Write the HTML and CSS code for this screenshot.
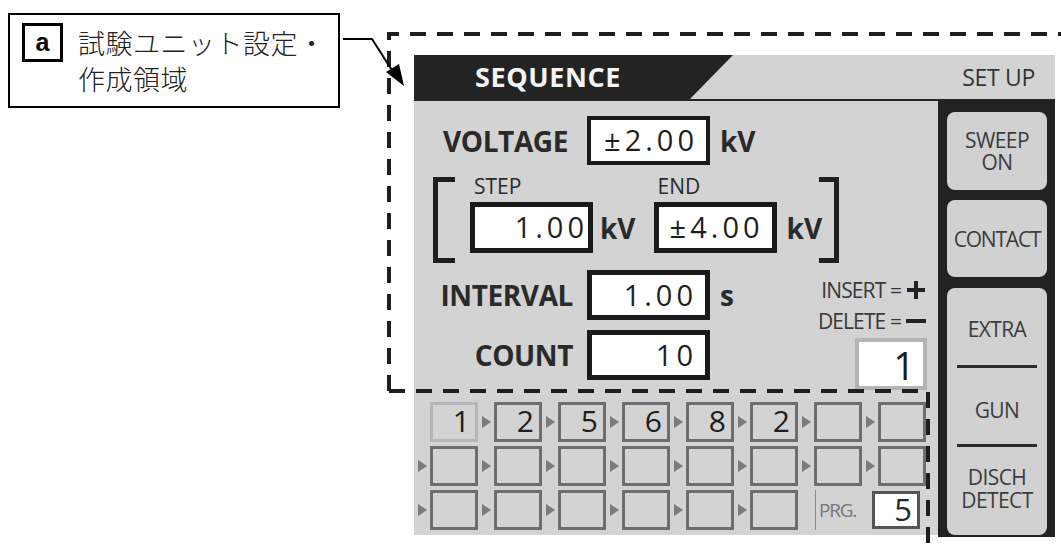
FILE: index.html
```html
<!DOCTYPE html>
<html>
<head lang="ja">
    <meta charset="UTF-8">
    <title>試験ユニット設定・作成領域</title>
    <link rel="stylesheet" href="styles.css">
</head>
<body>
<div id="figure">
    <div class="callout">
        <span class="mark">a</span>
        <p class="note">試験ユニット設定・<br>作成領域</p>
    </div>

    <div class="panel">
        <div class="head">
            <div class="tab">SEQUENCE</div>
            <div class="setup">SET UP</div>
        </div>
        <div class="body">
            <div class="main">
                <div class="upper">
                    <div class="settings">
                        <div class="row voltage">
                            <span class="label">VOLTAGE</span>
                            <span class="box">±2.00</span>
                            <span class="unit">kV</span>
                        </div>
                        <div class="sweep">
                            <span class="bracket left"></span>
                            <div class="field step">
                                <span class="cap">STEP</span>
                                <div class="line">
                                    <span class="box">1.00</span>
                                    <span class="unit">kV</span>
                                </div>
                            </div>
                            <div class="field end">
                                <span class="cap">END</span>
                                <div class="line">
                                    <span class="box">±4.00</span>
                                    <span class="unit">kV</span>
                                </div>
                            </div>
                            <span class="bracket right"></span>
                        </div>
                        <div class="row interval">
                            <span class="label">INTERVAL</span>
                            <span class="box">1.00</span>
                            <span class="unit">s</span>
                        </div>
                        <div class="row count">
                            <span class="label">COUNT</span>
                            <span class="box">10</span>
                        </div>
                    </div>
                    <div class="sideinfo">
                        <div class="key">INSERT =
                            <svg width="22" height="22" viewBox="0 0 22 22"><path d="M11 2V20M2 11H20" stroke="#222" stroke-width="4"/></svg>
                        </div>
                        <div class="key">DELETE =
                            <svg width="22" height="22" viewBox="0 0 22 22"><path d="M1 11H21" stroke="#222" stroke-width="4"/></svg>
                        </div>
                        <div class="unitno">1</div>
                    </div>
                </div>

                <div class="grid">
                    <div class="seq">
                        <i class="gap"></i><b class="cell first">1</b>
                        <i class="arr"></i><b class="cell">2</b>
                        <i class="arr"></i><b class="cell">5</b>
                        <i class="arr"></i><b class="cell">6</b>
                        <i class="arr"></i><b class="cell">8</b>
                        <i class="arr"></i><b class="cell">2</b>
                        <i class="arr"></i><b class="cell"></b>
                        <i class="arr"></i><b class="cell"></b>
                    </div>
                    <div class="seq">
                        <i class="arr"></i><b class="cell"></b>
                        <i class="arr"></i><b class="cell"></b>
                        <i class="arr"></i><b class="cell"></b>
                        <i class="arr"></i><b class="cell"></b>
                        <i class="arr"></i><b class="cell"></b>
                        <i class="arr"></i><b class="cell"></b>
                        <i class="arr"></i><b class="cell"></b>
                        <i class="arr"></i><b class="cell"></b>
                    </div>
                    <div class="seq">
                        <i class="arr"></i><b class="cell"></b>
                        <i class="arr"></i><b class="cell"></b>
                        <i class="arr"></i><b class="cell"></b>
                        <i class="arr"></i><b class="cell"></b>
                        <i class="arr"></i><b class="cell"></b>
                        <i class="arr"></i><b class="cell"></b>
                        <span class="prg">PRG.</span>
                        <b class="prgno">5</b>
                    </div>
                </div>
            </div>

            <div class="side">
                <div class="btn sweepon"><span>SWEEP</span><span>ON</span></div>
                <div class="btn contact">CONTACT</div>
                <div class="btn stack">
                    <span>EXTRA</span>
                    <hr class="rule1">
                    <span>GUN</span>
                    <hr class="rule2">
                    <span class="disch">DISCH</span>
                    <span class="disch">DETECT</span>
                </div>
            </div>
        </div>
    </div>
</div>

<svg class="overlay" width="1061" height="555" viewBox="0 0 1061 555">
    <path d="M389 391V34H1061" fill="none" stroke="#1e1e1e" stroke-width="4" stroke-dasharray="16 11"/>
    <path d="M389 391H928V545" fill="none" stroke="#1e1e1e" stroke-width="4" stroke-dasharray="16 11"/>
    <polyline points="343,39 372,39 395,75" fill="none" stroke="#000" stroke-width="2"/>
    <path d="M386 72L404 86L399 64Z" fill="#000"/>
</svg>
</body>
</html>
```

FILE: styles.css
```css
*{
    margin: 0;
    padding: 0;
}
body{
    width: 1061px;
    height: 555px;
    background: #ffffff;
    position: relative;
    overflow: hidden;
    font-family: "Open Sans", "Liberation Sans", sans-serif;
    color: #2a2a2a;
}
#figure{
    display: flex;
    align-items: flex-start;
    padding: 13px 0 0 8px;
}

/* callout */
.callout{
    width: 332px;
    height: 95px;
    box-sizing: border-box;
    border: 2px solid #000000;
    display: flex;
    align-items: flex-start;
    padding: 8px 0 0 12px;
}
.mark{
    width: 41px;
    height: 39px;
    box-sizing: border-box;
    border: 3px solid #000000;
    font: bold 25px/33px "Liberation Sans", sans-serif;
    text-align: center;
    color: #000000;
}
.note{
    margin: 2px 0 0 15px;
    font: 300 27px/36px "Noto Sans CJK JP", sans-serif;
    color: #222222;
    letter-spacing: 0.5px;
}

/* panel */
.panel{
    margin: 42px 0 0 74px;
    width: 641px;
    height: 482px;
    display: flex;
    flex-direction: column;
}
.head{
    height: 44px;
    background: #d3d3d3;
    border-bottom: 2px solid #262626;
    display: flex;
    align-items: center;
    justify-content: space-between;
}
.tab{
    width: 319px;
    height: 44px;
    box-sizing: border-box;
    background: #232323;
    clip-path: polygon(0 0, 100% 0, calc(100% - 43px) 100%, 0 100%);
    color: #f4f4f4;
    font-size: 27px;
    font-weight: 700;
    letter-spacing: 0.6px;
    line-height: 44px;
    padding-left: 61px;
}
.setup{
    font-size: 23px;
    color: #333333;
    padding-right: 20px;
    letter-spacing: -0.3px;
}
.body{
    flex: 1;
    display: flex;
}
.main{
    width: 524px;
    background: #d3d3d3;
    height: 434px;
}
.upper{
    height: 290px;
    display: flex;
}
.settings{
    flex: none;
    width: 390px;
    padding-top: 15px;
}
.row{
    display: flex;
    align-items: center;
    padding-left: 4px;
}
.label{
    width: 150px;
    text-align: right;
    font-size: 28px;
    font-weight: 700;
    letter-spacing: -0.4px;
    margin-right: 19px;
}
.interval .label, .count .label{
    width: 155px;
    margin-right: 14px;
}
.box{
    width: 123px;
    height: 49px;
    box-sizing: border-box;
    border: 4px solid #1a1a1a;
    background: #ffffff;
    text-align: right;
    font-size: 29px;
    line-height: 40px;
    letter-spacing: 4px;
    padding-right: 8px;
    color: #1e1e1e;
}
.unit{
    font-size: 28px;
    font-weight: 700;
    margin-left: 10px;
}
.sweep{
    display: flex;
    margin: 12px 0 0 19px;
    height: 76px;
}
.bracket{
    width: 17px;
    height: 76px;
    flex: none;
    border: 5px solid #1e1e1e;
}
.bracket.left{
    border-right: none;
    margin-right: 15px;
}
.bracket.right{
    border-left: none;
    width: 15px;
    margin-left: -3px;
}
.field{
    display: flex;
    flex-direction: column;
}
.field.end{
    margin-left: 18px;
}
.cap{
    height: 25px;
    font-size: 21px;
    line-height: 18px;
    padding-left: 4px;
}
.field .box{
    height: 51px;
    border-width: 5px;
}
.step .box{
    padding-right: 0;
}
.field .unit{
    margin-left: 7px;
}
.field.end .unit{
    margin-left: 10px;
}
.line{
    display: flex;
    align-items: center;
}
.interval{
    margin-top: 17px;
}
.interval .box, .count .box{
    height: 50px;
    border-width: 5px;
}
.count{
    margin-top: 10px;
}
.sideinfo{
    flex: none;
    margin-left: auto;
    padding-right: 11px;
    display: flex;
    flex-direction: column;
    align-items: flex-end;
    justify-content: flex-end;
    padding-bottom: 1px;
}
.key{
    display: flex;
    align-items: center;
    white-space: nowrap;
    font-size: 21px;
    letter-spacing: -0.9px;
    color: #383838;
    height: 31px;
}
.key svg{
    margin-left: 4px;
}
.unitno{
    margin-top: 2px;
    width: 72px;
    height: 52px;
    box-sizing: border-box;
    border: 4px solid #b4b4b4;
    background: #ffffff;
    text-align: right;
    font-size: 38px;
    line-height: 46px;
    padding-right: 8px;
    color: #1a1a1a;
}

/* sequence grid */
.grid{
    padding-top: 11px;
}
.seq{
    display: flex;
    align-items: center;
    height: 40px;
    margin-bottom: 4px;
}
.seq i{
    width: 16px;
    height: 40px;
    flex: none;
    position: relative;
}
.seq .arr:before{
    content: "";
    position: absolute;
    left: 4px;
    top: 14px;
    border-left: 9px solid #7a7a7a;
    border-top: 6px solid transparent;
    border-bottom: 6px solid transparent;
}
.cell{
    width: 48px;
    height: 40px;
    box-sizing: border-box;
    border: 3px solid #6e6e6e;
    text-align: right;
    font-size: 30px;
    font-weight: 400;
    line-height: 32px;
    padding-right: 5px;
    color: #1e1e1e;
}
.cell.first{
    border-color: #b6b6b6;
}
.prg{
    margin-left: 17px;
    border-left: 1px solid #8a8a8a;
    height: 40px;
    line-height: 40px;
    padding-left: 3px;
    font-size: 19px;
    letter-spacing: -1.2px;
    color: #777777;
    width: 57px;
    box-sizing: border-box;
}
.prgno{
    width: 48px;
    height: 38px;
    box-sizing: border-box;
    border: 3px solid #555555;
    background: #ffffff;
    text-align: right;
    font-size: 31px;
    font-weight: 400;
    line-height: 31px;
    padding-right: 5px;
}

/* side buttons */
.side{
    width: 117px;
    height: 436px;
    background: #222222;
    box-sizing: border-box;
    padding: 11px 8px 2px 9px;
    display: flex;
    flex-direction: column;
}
.btn{
    background: #d1d1d1;
    border-radius: 8px;
    text-align: center;
    font-size: 21px;
    line-height: 24px;
    color: #3c3c3c;
    letter-spacing: -0.6px;
    display: flex;
    flex-direction: column;
    align-items: center;
    justify-content: center;
}
.sweepon{
    height: 78px;
}
.sweepon span{
    display: block;
    height: 22px;
    line-height: 22px;
}
.contact{
    height: 77px;
    margin-top: 10px;
    white-space: nowrap;
    letter-spacing: -1.2px;
}
.stack{
    flex: 1;
    margin-top: 11px;
    justify-content: flex-start;
    padding-top: 29px;
}
.stack hr{
    width: 80px;
    border: none;
    border-top: 3px solid #2a2a2a;
}
.rule1{
    margin: 24px 0 30px;
}
.rule2{
    margin: 22px 0 19px;
}
.disch{
    display: block;
    height: 23px;
    line-height: 23px;
}

.overlay{
    position: absolute;
    left: 0;
    top: 0;
}
```
